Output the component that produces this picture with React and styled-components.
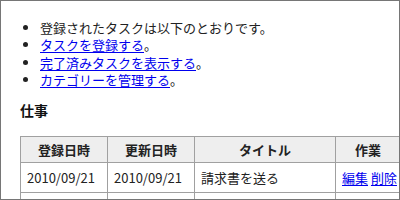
import React from "react";
import styled, { createGlobalStyle } from "styled-components";

const GlobalStyle = createGlobalStyle`
    html, body {
        margin: 0;
        padding: 0;
        background: #fff;
    }
    body {
        font-family: "Noto Sans CJK JP", "Noto Sans", sans-serif;
        font-size: 13px;
        color: #222;
    }
`

const Frame = styled.div`
    width: 400px;
    height: 200px;
    box-sizing: border-box;
    border: 1px solid #767676;
    overflow: hidden;
    padding: 18px 0 0 19px;
`

const Menu = styled.ul`
    margin: 0;
    padding-left: 20px;
    line-height: 17.3px;
`

const Item = styled.li`
    list-style: disc;
`

const Link = styled.a`
    color: #0000ee;
    text-decoration: underline;
    text-underline-offset: 2px;
`

const Heading = styled.h2`
    margin: 13px 0 17px;
    font-size: 14px;
    line-height: 18px;
    font-weight: bold;
    color: #111;
`

const Table = styled.table`
    border-collapse: collapse;
    table-layout: fixed;
    width: 460px;
`

const Head = styled.th`
    background: #eeeeee;
    border: 1px solid #a0a0a0;
    padding: 4px 6px;
    height: 17px;
    line-height: 17px;
    font-weight: bold;
    text-align: center;
`

const Cell = styled.td`
    border: 1px solid #a0a0a0;
    padding: 6px 6px;
    height: 17px;
    line-height: 17px;
    text-align: left;
    white-space: nowrap;
`

const tasks = [
    { id: 1, created: "2010/09/21", updated: "2010/09/21", title: "請求書を送る" },
];

const App = () => {
    return (
        <Frame>
            <GlobalStyle />
            <Menu>
                <Item>登録されたタスクは以下のとおりです。</Item>
                <Item><Link href="#">タスクを登録する</Link>。</Item>
                <Item><Link href="#">完了済みタスクを表示する</Link>。</Item>
                <Item><Link href="#">カテゴリーを管理する</Link>。</Item>
            </Menu>
            <Heading>仕事</Heading>
            <Table>
                <colgroup>
                    <col style={{ width: 87 }} />
                    <col style={{ width: 87 }} />
                    <col style={{ width: 141 }} />
                    <col style={{ width: 65 }} />
                    <col />
                </colgroup>
                <thead>
                    <tr>
                        <Head>登録日時</Head>
                        <Head>更新日時</Head>
                        <Head>タイトル</Head>
                        <Head>作業</Head>
                        <Head></Head>
                    </tr>
                </thead>
                <tbody>
                    {tasks.map(task => (
                        <tr key={task.id}>
                            <Cell>{task.created}</Cell>
                            <Cell>{task.updated}</Cell>
                            <Cell>{task.title}</Cell>
                            <Cell><Link href="#">編集</Link> <Link href="#">削除</Link></Cell>
                            <Cell></Cell>
                        </tr>
                    ))}
                    <tr>
                        <Cell></Cell>
                        <Cell></Cell>
                        <Cell></Cell>
                        <Cell></Cell>
                        <Cell></Cell>
                    </tr>
                </tbody>
            </Table>
        </Frame>
    );
}

export default App;
